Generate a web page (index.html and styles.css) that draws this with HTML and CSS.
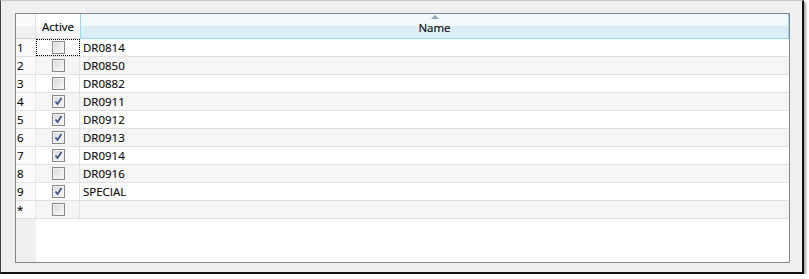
FILE: index.html
```html
<!DOCTYPE html>
<html>
<head>
<meta charset="utf-8">
<link rel="stylesheet" href="styles.css">
</head>
<body>
<div class="frame">
  <div class="grid">
    <div class="hdr">
      <div class="h-corner"></div>
      <div class="h-active">Active</div>
      <div class="h-name"><span class="sort"></span>Name</div>
    </div>
    <div class="row"><div class="rh">1</div><div class="c-act focus"><span class="cb"></span></div><div class="c-name">DR0814</div></div>
    <div class="row alt"><div class="rh">2</div><div class="c-act"><span class="cb"></span></div><div class="c-name">DR0850</div></div>
    <div class="row"><div class="rh">3</div><div class="c-act"><span class="cb"></span></div><div class="c-name">DR0882</div></div>
    <div class="row alt"><div class="rh">4</div><div class="c-act"><span class="cb on"><svg viewBox="0 0 11 11" width="11" height="11"><path d="M2.5 5.5 L4.5 8 L8.5 2" fill="none" stroke="#3f5690" stroke-width="1.8"/></svg></span></div><div class="c-name">DR0911</div></div>
    <div class="row"><div class="rh">5</div><div class="c-act"><span class="cb on"><svg viewBox="0 0 11 11" width="11" height="11"><path d="M2.5 5.5 L4.5 8 L8.5 2" fill="none" stroke="#3f5690" stroke-width="1.8"/></svg></span></div><div class="c-name">DR0912</div></div>
    <div class="row alt"><div class="rh">6</div><div class="c-act"><span class="cb on"><svg viewBox="0 0 11 11" width="11" height="11"><path d="M2.5 5.5 L4.5 8 L8.5 2" fill="none" stroke="#3f5690" stroke-width="1.8"/></svg></span></div><div class="c-name">DR0913</div></div>
    <div class="row"><div class="rh">7</div><div class="c-act"><span class="cb on"><svg viewBox="0 0 11 11" width="11" height="11"><path d="M2.5 5.5 L4.5 8 L8.5 2" fill="none" stroke="#3f5690" stroke-width="1.8"/></svg></span></div><div class="c-name">DR0914</div></div>
    <div class="row alt"><div class="rh">8</div><div class="c-act"><span class="cb"></span></div><div class="c-name">DR0916</div></div>
    <div class="row"><div class="rh">9</div><div class="c-act"><span class="cb on"><svg viewBox="0 0 11 11" width="11" height="11"><path d="M2.5 5.5 L4.5 8 L8.5 2" fill="none" stroke="#3f5690" stroke-width="1.8"/></svg></span></div><div class="c-name">SPECIAL</div></div>
    <div class="row alt"><div class="rh">*</div><div class="c-act"><span class="cb"></span></div><div class="c-name"></div></div>
    <div class="filler"><div class="rh-fill"></div><div class="fill-rest"></div></div>
  </div>
</div>
</body>
</html>
```

FILE: styles.css
```css
* { box-sizing: border-box; }
html, body { margin: 0; padding: 0; background: #fff; }
body {
  font-family: "Open Sans", "Noto Sans", sans-serif;
  font-size: 11.5px;
  color: #000;
  -webkit-text-stroke: 0.12px #000;
}
.frame {
  width: 804px;
  height: 274px;
  background: #f0f0f0;
  border-top: 1px solid #c8c8c8;
  border-left: 1px solid #404040;
  border-right: 2px solid #111;
  border-bottom: 2px solid #111;
  box-shadow: 2px 2px 2px rgba(0,0,0,0.35);
  padding: 12px 0 0 14px;
}
.grid {
  width: 775px;
  height: 250px;
  border: 1px solid #828790;
  background: #fff;
  display: flex;
  flex-direction: column;
}
.hdr {
  display: flex;
  height: 25px;
  flex: none;
}
.h-corner {
  width: 20px;
  background: linear-gradient(#f9f9f9 0 50%, #f1f1f1 50%);
  border-right: 1px solid #e4e4e4;
  border-bottom: 1px solid #d5d5d5;
}
.h-active {
  width: 44px;
  background: linear-gradient(#ffffff 0 50%, #f7f8fa 50%);
  border-bottom: 1px solid #d5d5d5;
  display: flex;
  align-items: center;
  justify-content: center;
  padding-top: 1px;
}
.h-name {
  flex: 1;
  background: linear-gradient(#f2f9fc 0 50%, #dbeef7 50%);
  border-left: 1px solid #96d9f9;
  border-right: 1px solid #96d9f9;
  border-bottom: 1px solid #96d9f9;
  display: flex;
  align-items: center;
  justify-content: center;
  position: relative;
  padding-top: 3px;
}
.sort {
  position: absolute;
  top: 1px;
  left: 50%;
  margin-left: -4px;
  width: 0;
  height: 0;
  border-left: 4px solid transparent;
  border-right: 4px solid transparent;
  border-bottom: 4px solid #8aa6ba;
}
.row {
  display: flex;
  height: 18px;
  flex: none;
  border-bottom: 1px solid #e2e2e2;
}
.row.alt .c-act, .row.alt .c-name { background: #f5f5f5; }
.rh {
  width: 20px;
  background: #fafafa;
  border-right: 1px solid #e8e8e8;
  padding-left: 1px;
  line-height: 17px;
}
.c-act {
  width: 44px;
  border-right: 1px solid #e2e2e2;
  display: flex;
  align-items: center;
  justify-content: center;
  padding-left: 1px;
}
.c-act.focus { outline: 1px dotted #000; outline-offset: -1px; }
.c-name {
  flex: 1;
  padding-left: 3px;
  line-height: 17px;
}
.cb {
  width: 13px;
  height: 13px;
  border: 1px solid #878888;
  background: linear-gradient(135deg, #d8d8d8, #fbfbfb);
  box-shadow: inset 0 0 0 1px #f4f4f4;
  display: flex;
  align-items: center;
  justify-content: center;
}
.filler { flex: 1; display: flex; }
.rh-fill { width: 20px; background: #f0f0f0; }
.fill-rest { flex: 1; background: #fff; }
```
